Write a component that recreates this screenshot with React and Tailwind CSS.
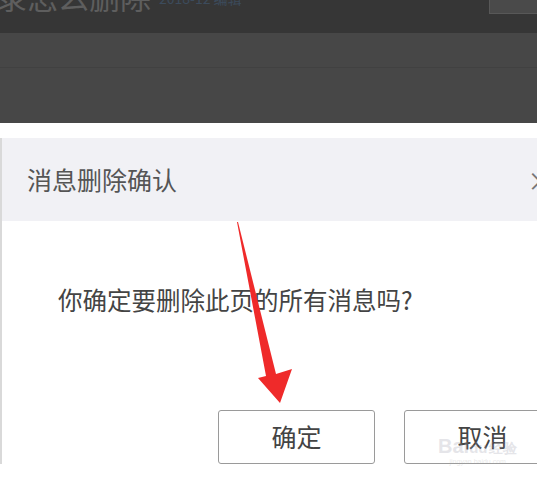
const App = () => {
  return (
    <div className="relative w-[537px] h-[486px] overflow-hidden bg-white font-['Noto_Sans_CJK_SC','Noto_Sans',sans-serif]">
      {/* Page top bar */}
      <div className="relative h-[33px] bg-[#363636] flex items-start overflow-hidden">
        <span className="-mt-[24px] -ml-[4px] text-[31px] leading-[40px] text-[#5e5e5e] whitespace-nowrap">录怎么删除</span>
        <span className="-mt-[12px] ml-[8px] text-[14px] leading-[20px] text-[#3c4b5c] whitespace-nowrap">2018-12 编辑</span>
        <div className="ml-auto w-[48px] h-[14px] bg-[#4a4a4a] border-l border-b border-[#585858]"></div>
      </div>
      <div className="h-[90px] bg-[#474747] flex flex-col">
        <div className="h-[35px] border-b border-[#414141]"></div>
      </div>

      {/* Dialog */}
      <div className="mt-[15px] border-l-2 border-[#d9d9d9] w-[600px]">
        <div className="h-[83px] bg-[#f1f1f5] flex items-center pl-[25px]">
          <span className="text-[25px] leading-none text-[#555]">消息删除确认</span>
          <span className="ml-[350px] text-[26px] leading-none text-[#777]">×</span>
        </div>
        <div className="pt-[64px] pl-[56px] text-[24.5px] leading-[30px] text-[#444]">
          你确定要删除此页的所有消息吗?
        </div>
        <div className="mt-[95px] pl-[216px] flex gap-[29px]">
          <button className="w-[157px] h-[54px] border border-[#9a9a9a] rounded-[3px] text-[25px] text-[#444] bg-white">
            确定
          </button>
          <button className="w-[157px] h-[54px] border border-[#9a9a9a] rounded-[3px] text-[25px] text-[#444] bg-white">
            取消
          </button>
        </div>
      </div>

      {/* Watermark */}
      <div className="absolute left-[438px] top-[436px] flex flex-col items-center opacity-25 pointer-events-none whitespace-nowrap">
        <span className="text-[20px] leading-none font-bold text-[#99a] font-['Liberation_Sans',sans-serif]">Bai<span className="text-[15px]">du</span><span className="ml-[2px] text-[14px]">经验</span></span>
        <span className="mt-[2px] text-[7px] leading-none text-[#aaa] font-['Liberation_Sans',sans-serif]">jingyan.baidu.com</span>
      </div>

      {/* Red arrow */}
      <svg className="absolute left-0 top-0 pointer-events-none" width="537" height="486">
        <polygon
          points="237,222 238,222 276,374 292,369 280,403 258,378 266,376"
          fill="#ef2a2a"
        />
      </svg>
    </div>
  )
}

export default App
